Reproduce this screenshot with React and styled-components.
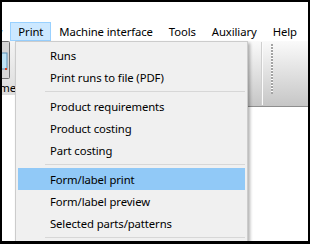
import React from "react";
import styled, { createGlobalStyle } from "styled-components";

const Global = createGlobalStyle`
  html, body { margin: 0; padding: 0; background: #000; }
  body { font-family: "Noto Sans", "Segoe UI", sans-serif; }
  * { box-sizing: border-box; }
`;

const Frame = styled.div`
  width: 310px;
  height: 244px;
  border: 2px solid #000;
  border-bottom-width: 3px;
  background: #fff;
  overflow: hidden;
`;

const Window = styled.div`
  position: relative;
  width: 100%;
  height: 100%;
  overflow: hidden;
  display: flex;
  flex-direction: column;
  background: #fff;
  font-size: 11.3px;
  letter-spacing: -0.1px;
  color: #000;
`;

const TitleStrip = styled.div`
  height: 20px;
  flex: none;
  background: #fff;
`;

const MenuBar = styled.div`
  height: 19px;
  flex: none;
  display: flex;
  align-items: stretch;
  background: #fff;
  white-space: nowrap;
`;

const MenuBarItem = styled.div`
  display: flex;
  align-items: center;
  padding: 0 7px;
  border: 1px solid ${(p) => (p.$active ? "#99D1FF" : "transparent")};
  background: ${(p) => (p.$active ? "#CCE8FF" : "transparent")};
  margin-left: ${(p) => (p.$offset ? `${p.$offset}px` : "0")};
  line-height: 1;
`;

const ToolArea = styled.div`
  display: flex;
  align-items: flex-start;
  flex: none;
`;

const LeftStrip = styled.div`
  width: 13px;
  height: 54px;
  overflow: hidden;
  display: flex;
  justify-content: flex-end;
  background: linear-gradient(#f4f4f4, #dcdcdc);
`;

const ToolButton = styled.div`
  flex: none;
  display: flex;
  flex-direction: column;
  align-items: center;
  margin-right: -1px;
`;

const ToolLabel = styled.span`
  margin-top: 3px;
  line-height: 12px;
`;

const RightStrip = styled.div`
  flex: 1;
  height: 66px;
  display: flex;
  justify-content: flex-end;
  align-items: center;
  gap: 8px;
  padding-right: 35px;
  background: linear-gradient(#fafafa, #c6c6c6);
  border-bottom: 1px solid #8e8e8e;
`;

const ToolSeparator = styled.div`
  width: 2px;
  height: 63px;
  border-left: 1px solid #cfcfcf;
  border-right: 1px solid #fbfbfb;
`;

const Grip = styled.div`
  width: 2px;
  height: 50px;
  margin-top: -10px;
  background: repeating-linear-gradient(
    to bottom,
    #a3a3a3 0 2px,
    #ffffff 2px 3px
  );
`;

const Popup = styled.div`
  position: absolute;
  left: 13px;
  top: 39px;
  width: 233px;
  padding: 2px;
  background: #f0f0f0;
  border: 1px solid #cccccc;
  box-shadow: 2px 2px 3px rgba(0, 0, 0, 0.3);
  display: flex;
  flex-direction: column;
`;

const Item = styled.div`
  height: 22px;
  display: flex;
  align-items: center;
  padding-left: 32px;
  white-space: nowrap;
  background: ${(p) => (p.$highlight ? "#91C9F7" : "transparent")};
`;

const Separator = styled.div`
  height: 7px;
  display: flex;
  align-items: center;
  padding-left: 27px;
  &::after {
    content: "";
    flex: 1;
    height: 1px;
    background: #d7d7d7;
  }
`;

const ToolIcon = () => (
  <svg width="20" height="38" viewBox="0 0 20 38">
    <rect x="0.5" y="0.5" width="19" height="37" rx="1" fill="#d6d6d6" stroke="#6e6e6e" />
    <rect x="3" y="12" width="14" height="16" fill="#bfe3f5" stroke="#5a8fb5" />
    <rect x="15" y="27" width="2" height="2" fill="#d04020" />
  </svg>
);

const menuBarItems = ["View", "Print", "Machine interface", "Tools", "Auxiliary", "Help"];

const menu = [
  ["Runs"],
  ["Print runs to file (PDF)"],
  null,
  ["Product requirements"],
  ["Product costing"],
  ["Part costing"],
  null,
  ["Form/label print", true],
  ["Form/label preview"],
  ["Selected parts/patterns"],
  null,
];

export default function App() {
  return (
    <>
      <Global />
      <Frame>
        <Window>
          <TitleStrip />
          <MenuBar>
            {menuBarItems.map((t, i) => (
              <MenuBarItem key={t} $active={t === "Print"} $offset={i === 0 ? -32 : 0}>
                {t}
              </MenuBarItem>
            ))}
          </MenuBar>
          <ToolArea>
            <LeftStrip>
              <ToolButton>
                <ToolIcon />
                <ToolLabel>Name</ToolLabel>
              </ToolButton>
            </LeftStrip>
            <RightStrip>
              <ToolSeparator />
              <Grip />
            </RightStrip>
          </ToolArea>
          <Popup>
            {menu.map((m, i) =>
              m ? (
                <Item key={i} $highlight={m[1]}>
                  {m[0]}
                </Item>
              ) : (
                <Separator key={i} />
              )
            )}
          </Popup>
        </Window>
      </Frame>
    </>
  );
}
